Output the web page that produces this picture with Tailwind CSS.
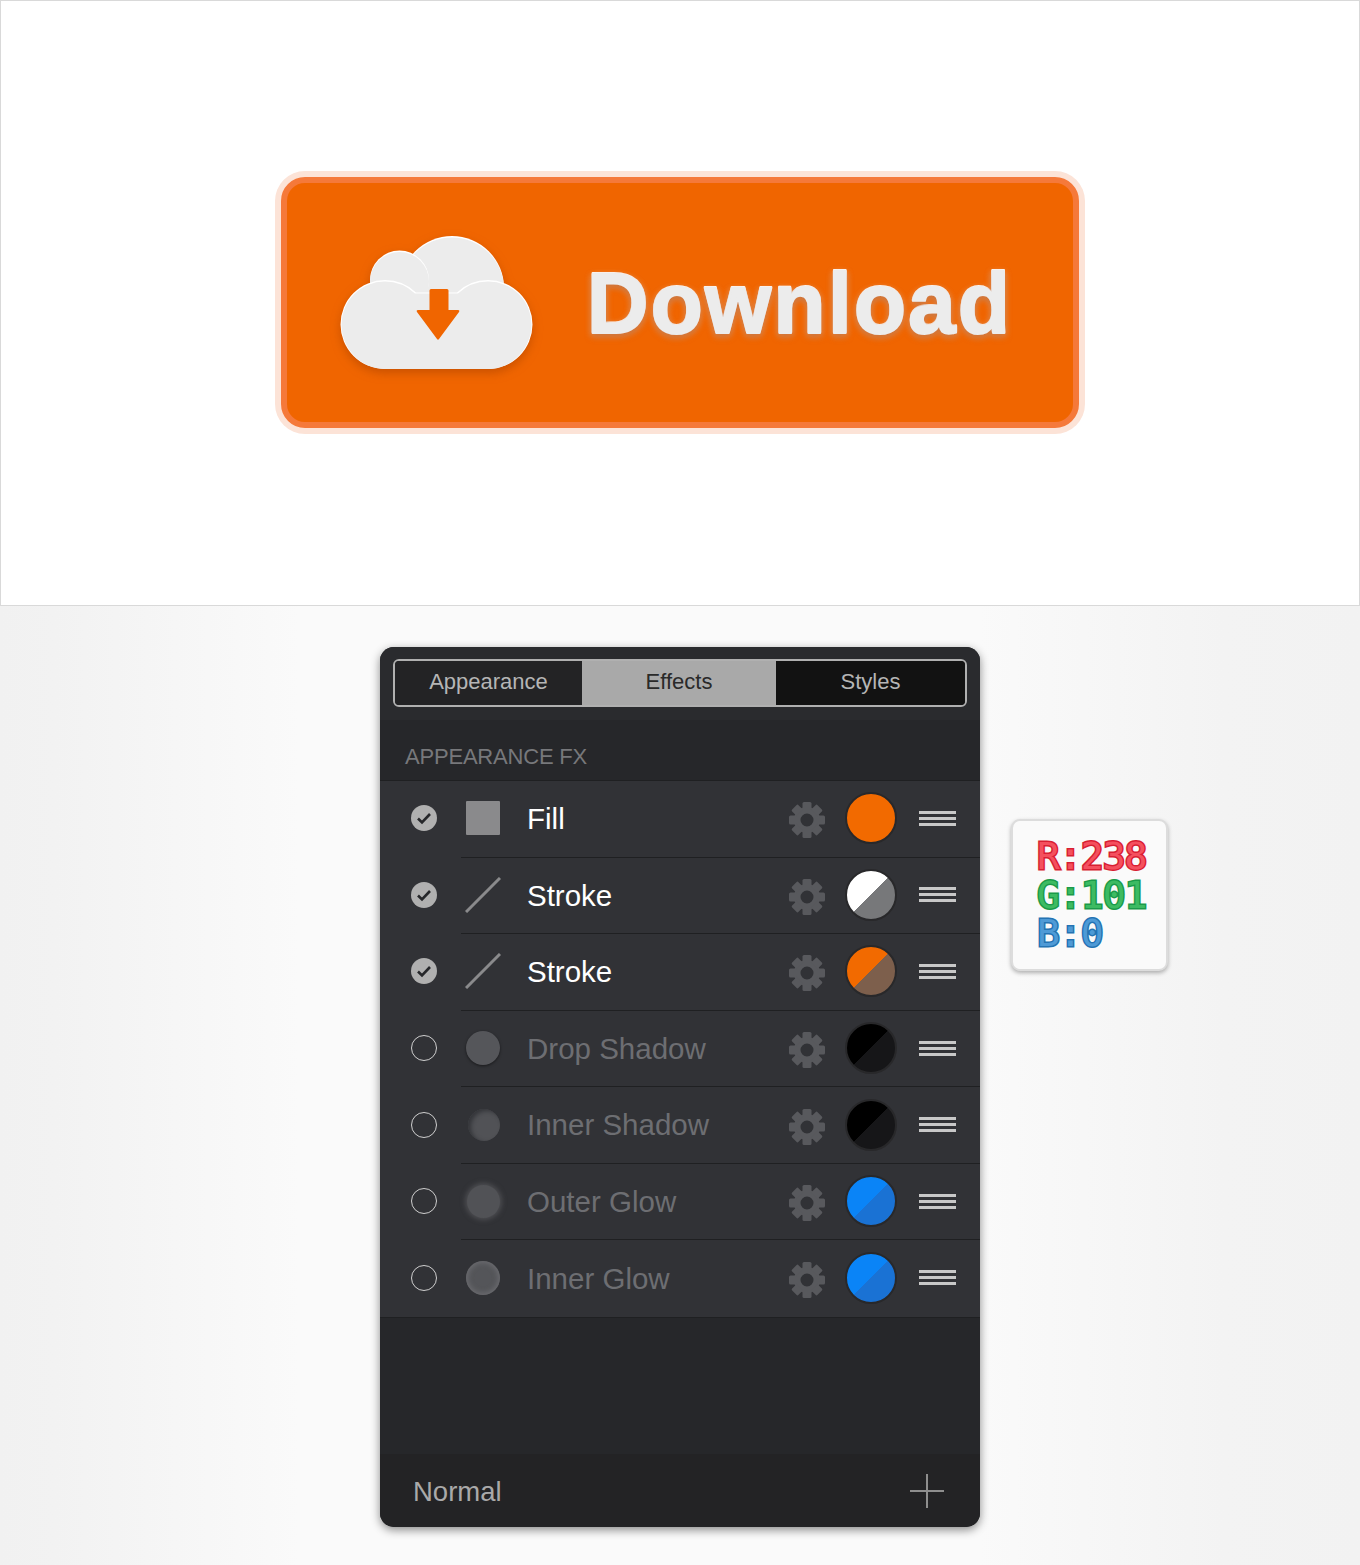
<!DOCTYPE html>
<html lang="en">
<head>
    <meta charset="UTF-8">
    <title>Download button and appearance panel</title>
    <script src="https://cdn.jsdelivr.net/npm/@tailwindcss/browser@4"></script>
</head>
<body class="w-[1360px] h-[1565px] overflow-hidden font-['Liberation_Sans',Arial,sans-serif] bg-[linear-gradient(90deg,#f1f1f1_0%,#f2f2f2_4%,#fafafa_22%,#fafafa_72%,#f3f3f3_90%,#f2f2f2_100%)]">
    <svg width="0" height="0" class="absolute">
        <defs>
            <g id="gear" fill="#58595d">
                <path fill-rule="evenodd" d="M18 5a13 13 0 1 0 0 26a13 13 0 1 0 0-26zM18 11.500a6.500 6.500 0 1 1 0 13a6.500 6.500 0 1 1 0-13z"/>
                <rect x="13.500" y="0" width="9" height="8" rx="1.500"/>
                <rect x="13.500" y="28" width="9" height="8" rx="1.500"/>
                <rect x="0" y="13.500" width="8" height="9" rx="1.500"/>
                <rect x="28" y="13.500" width="8" height="9" rx="1.500"/>
                <rect x="13.500" y="0" width="9" height="8" rx="1.500" transform="rotate(45 18 18)"/>
                <rect x="13.500" y="0" width="9" height="8" rx="1.500" transform="rotate(135 18 18)"/>
                <rect x="13.500" y="0" width="9" height="8" rx="1.500" transform="rotate(225 18 18)"/>
                <rect x="13.500" y="0" width="9" height="8" rx="1.500" transform="rotate(315 18 18)"/>
            </g>
        </defs>
    </svg>

    <!-- Button preview -->
    <section class="h-[606px] bg-white border border-[#d9d9d9] flex items-center justify-center pb-px">
        <div class="w-[798px] h-[251px] rounded-[24px] bg-[#f06500] border-[6px] border-[#f5793a] shadow-[0_0_0_6px_#fce3d7] flex items-center pl-[53px]">
            <svg class="drop-shadow-[0_4px_5px_rgba(170,65,0,0.55)] shrink-0" width="194" height="145" viewBox="340 230 194 145">
                <circle cx="452" cy="288" r="52" fill="#fff"/>
                <circle cx="452" cy="289.500" r="52" fill="#ececec"/>
                <circle cx="399.500" cy="280" r="29.500" fill="#fff"/>
                <circle cx="399.500" cy="281.500" r="29.500" fill="#ececec"/>
                <path d="M385 280a44.500 44.500 0 0 0 0 89h103a44.500 44.500 0 0 0 0-89a44.500 44.500 0 0 0-31 12.500h-41a44.500 44.500 0 0 0-31-12.500z" fill="#fff"/>
                <path d="M385 281.500a43 43 0 0 0-43.500 43c0 24 19.500 44.500 43.500 44.500h103c24 0 43.500-20.500 43.500-44.500a43 43 0 0 0-43.500-43a44 44 0 0 0-30 12h-43a44 44 0 0 0-30-12z" fill="#ececec"/>
                <path d="M430 289h17q1.500 0 1.500 1.500v19.500h9.500q2 0 1 2l-20 27q-1 1.500-2 0l-20-27q-1-2 1-2h11.500v-19.500q0-1.500 1.500-1.500z" fill="#f06500"/>
            </svg>
            <svg class="ml-[50px] shrink-0 overflow-visible drop-shadow-[0_-1px_0_#ffffff]" width="430" height="90">
                <text x="3" y="74.500" font-family="Liberation Sans" font-weight="700" font-size="85" letter-spacing="2.400" fill="#ececec" stroke="#ececec" stroke-width="2" stroke-linejoin="round" style="filter: drop-shadow(0 3px 3px rgba(170,65,0,0.6))">Download</text>
            </svg>
        </div>
    </section>

    <!-- Panel and colour chip -->
    <section class="grid grid-cols-[380px_600px_1fr] pt-[41px]">
        <div class="col-start-2 h-[880px] rounded-[14px] overflow-hidden flex flex-col bg-[#26272a] shadow-[0_3px_10px_rgba(0,0,0,0.45)]">
            <div class="h-[73px] shrink-0 bg-[#2a2b2e] pt-3 px-[13px]">
                <div class="h-[48px] w-[574px] flex rounded-[6px] border-2 border-[#b0b0b0] overflow-hidden text-[22px] text-[#b5b5b5]">
                    <div class="w-[187px] bg-[#232325] flex items-center justify-center pb-1">Appearance</div>
                    <div class="w-[194px] bg-[#a9a9a9] text-[#2a2a2a] flex items-center justify-center pb-1">Effects</div>
                    <div class="flex-1 bg-[#121212] flex items-center justify-center pb-1">Styles</div>
                </div>
            </div>
            <div class="h-[61px] shrink-0 pl-[25px] pt-[24px] text-[22px] leading-[26px] tracking-[-0.2px] text-[#77787b] border-b border-[#1f2022]">APPEARANCE FX</div>

            <div class="h-[537px] shrink-0 bg-[#313236] flex flex-col border-b border-[#1f2022]">
                <!-- Fill -->
                <div class="relative flex-1 flex items-center pl-[31px] pb-[2px] after:absolute after:left-[81px] after:right-0 after:bottom-0 after:h-px after:bg-[#1f2022]">
                    <svg width="26" height="26" viewBox="0 0 26 26" class="shrink-0"><circle cx="13" cy="13" r="13" fill="#b0b0b0"/><path d="M7 13.500l4 4l8-8.500" fill="none" stroke="#26272a" stroke-width="2.600"/></svg>
                    <div class="w-[92px] shrink-0 flex justify-center"><div class="w-[34px] h-[34px] bg-[#8a8a8c] rounded-[1px]"></div></div>
                    <span class="ml-[-2px] w-[262px] text-[29.500px] text-white translate-y-px">Fill</span>
                    <svg width="36" height="36" class="translate-y-[2px] shrink-0"><use href="#gear"/></svg>
                    <div class="ml-[20px] w-[52px] h-[52px] rounded-full border-2 border-[#28282a] bg-[#f26a00] shrink-0"></div>
                    <div class="ml-[22px] w-[37px] h-[15px] flex flex-col justify-between shrink-0"><i class="h-[3px] bg-[#c8c8c8]"></i><i class="h-[3px] bg-[#c8c8c8]"></i><i class="h-[3px] bg-[#c8c8c8]"></i></div>
                </div>
                <!-- Stroke -->
                <div class="relative flex-1 flex items-center pl-[31px] pb-[2px] after:absolute after:left-[81px] after:right-0 after:bottom-0 after:h-px after:bg-[#1f2022]">
                    <svg width="26" height="26" viewBox="0 0 26 26" class="shrink-0"><circle cx="13" cy="13" r="13" fill="#b0b0b0"/><path d="M7 13.500l4 4l8-8.500" fill="none" stroke="#26272a" stroke-width="2.600"/></svg>
                    <div class="w-[92px] shrink-0 flex justify-center"><svg width="36" height="36"><path d="M1 35L35 1" stroke="#8a8a8c" stroke-width="3"/></svg></div>
                    <span class="ml-[-2px] w-[262px] text-[29.500px] text-white translate-y-px">Stroke</span>
                    <svg width="36" height="36" class="translate-y-[2px] shrink-0"><use href="#gear"/></svg>
                    <div class="ml-[20px] w-[52px] h-[52px] rounded-full border-2 border-[#28282a] bg-[linear-gradient(135deg,#ffffff_50%,#77787a_50%)] shrink-0"></div>
                    <div class="ml-[22px] w-[37px] h-[15px] flex flex-col justify-between shrink-0"><i class="h-[3px] bg-[#c8c8c8]"></i><i class="h-[3px] bg-[#c8c8c8]"></i><i class="h-[3px] bg-[#c8c8c8]"></i></div>
                </div>
                <!-- Stroke -->
                <div class="relative flex-1 flex items-center pl-[31px] pb-[2px] after:absolute after:left-[81px] after:right-0 after:bottom-0 after:h-px after:bg-[#1f2022]">
                    <svg width="26" height="26" viewBox="0 0 26 26" class="shrink-0"><circle cx="13" cy="13" r="13" fill="#b0b0b0"/><path d="M7 13.500l4 4l8-8.500" fill="none" stroke="#26272a" stroke-width="2.600"/></svg>
                    <div class="w-[92px] shrink-0 flex justify-center"><svg width="36" height="36"><path d="M1 35L35 1" stroke="#8a8a8c" stroke-width="3"/></svg></div>
                    <span class="ml-[-2px] w-[262px] text-[29.500px] text-white translate-y-px">Stroke</span>
                    <svg width="36" height="36" class="translate-y-[2px] shrink-0"><use href="#gear"/></svg>
                    <div class="ml-[20px] w-[52px] h-[52px] rounded-full border-2 border-[#28282a] bg-[linear-gradient(135deg,#f26a00_50%,#7d5f4c_50%)] shrink-0"></div>
                    <div class="ml-[22px] w-[37px] h-[15px] flex flex-col justify-between shrink-0"><i class="h-[3px] bg-[#c8c8c8]"></i><i class="h-[3px] bg-[#c8c8c8]"></i><i class="h-[3px] bg-[#c8c8c8]"></i></div>
                </div>
                <!-- Drop Shadow -->
                <div class="relative flex-1 flex items-center pl-[31px] pb-[2px] after:absolute after:left-[81px] after:right-0 after:bottom-0 after:h-px after:bg-[#1f2022]">
                    <div class="w-[26px] h-[26px] rounded-full border-[1.500px] border-[#cfcfcf] shrink-0"></div>
                    <div class="w-[92px] shrink-0 flex justify-center"><div class="w-[34px] h-[34px] rounded-full bg-[#55565a] shadow-[0_1px_3px_rgba(0,0,0,0.5)]"></div></div>
                    <span class="ml-[-2px] w-[262px] text-[29.500px] text-[#6d6e72] translate-y-px">Drop Shadow</span>
                    <svg width="36" height="36" class="translate-y-[2px] shrink-0"><use href="#gear"/></svg>
                    <div class="ml-[20px] w-[52px] h-[52px] rounded-full border-2 border-[#28282a] bg-[linear-gradient(135deg,#000000_50%,#161618_50%)] shrink-0"></div>
                    <div class="ml-[22px] w-[37px] h-[15px] flex flex-col justify-between shrink-0"><i class="h-[3px] bg-[#c8c8c8]"></i><i class="h-[3px] bg-[#c8c8c8]"></i><i class="h-[3px] bg-[#c8c8c8]"></i></div>
                </div>
                <!-- Inner Shadow -->
                <div class="relative flex-1 flex items-center pl-[31px] pb-[2px] after:absolute after:left-[81px] after:right-0 after:bottom-0 after:h-px after:bg-[#1f2022]">
                    <div class="w-[26px] h-[26px] rounded-full border-[1.500px] border-[#cfcfcf] shrink-0"></div>
                    <div class="w-[92px] shrink-0 flex justify-center"><div class="w-[32px] h-[32px] ml-[2px] rounded-full bg-[#515256] shadow-[inset_3px_2px_4px_rgba(49,50,54,0.9)]"></div></div>
                    <span class="ml-[-2px] w-[262px] text-[29.500px] text-[#6d6e72] translate-y-px">Inner Shadow</span>
                    <svg width="36" height="36" class="translate-y-[2px] shrink-0"><use href="#gear"/></svg>
                    <div class="ml-[20px] w-[52px] h-[52px] rounded-full border-2 border-[#28282a] bg-[linear-gradient(135deg,#000000_50%,#161618_50%)] shrink-0"></div>
                    <div class="ml-[22px] w-[37px] h-[15px] flex flex-col justify-between shrink-0"><i class="h-[3px] bg-[#c8c8c8]"></i><i class="h-[3px] bg-[#c8c8c8]"></i><i class="h-[3px] bg-[#c8c8c8]"></i></div>
                </div>
                <!-- Outer Glow -->
                <div class="relative flex-1 flex items-center pl-[31px] pb-[2px] after:absolute after:left-[81px] after:right-0 after:bottom-0 after:h-px after:bg-[#1f2022]">
                    <div class="w-[26px] h-[26px] rounded-full border-[1.500px] border-[#cfcfcf] shrink-0"></div>
                    <div class="w-[92px] shrink-0 flex justify-center"><div class="w-[33px] h-[33px] rounded-full bg-[#515256] shadow-[0_0_5px_2px_rgba(105,106,110,0.5)]"></div></div>
                    <span class="ml-[-2px] w-[262px] text-[29.500px] text-[#6d6e72] translate-y-px">Outer Glow</span>
                    <svg width="36" height="36" class="translate-y-[2px] shrink-0"><use href="#gear"/></svg>
                    <div class="ml-[20px] w-[52px] h-[52px] rounded-full border-2 border-[#28282a] bg-[linear-gradient(135deg,#0a84f7_50%,#1a72d4_50%)] shrink-0"></div>
                    <div class="ml-[22px] w-[37px] h-[15px] flex flex-col justify-between shrink-0"><i class="h-[3px] bg-[#c8c8c8]"></i><i class="h-[3px] bg-[#c8c8c8]"></i><i class="h-[3px] bg-[#c8c8c8]"></i></div>
                </div>
                <!-- Inner Glow -->
                <div class="relative flex-1 flex items-center pl-[31px] pb-[2px]">
                    <div class="w-[26px] h-[26px] rounded-full border-[1.500px] border-[#cfcfcf] shrink-0"></div>
                    <div class="w-[92px] shrink-0 flex justify-center"><div class="w-[34px] h-[34px] rounded-full bg-[#545559] shadow-[inset_0_0_5px_2px_rgba(115,116,120,0.7)]"></div></div>
                    <span class="ml-[-2px] w-[262px] text-[29.500px] text-[#6d6e72] translate-y-px">Inner Glow</span>
                    <svg width="36" height="36" class="translate-y-[2px] shrink-0"><use href="#gear"/></svg>
                    <div class="ml-[20px] w-[52px] h-[52px] rounded-full border-2 border-[#28282a] bg-[linear-gradient(135deg,#0a84f7_50%,#1a72d4_50%)] shrink-0"></div>
                    <div class="ml-[22px] w-[37px] h-[15px] flex flex-col justify-between shrink-0"><i class="h-[3px] bg-[#c8c8c8]"></i><i class="h-[3px] bg-[#c8c8c8]"></i><i class="h-[3px] bg-[#c8c8c8]"></i></div>
                </div>
            </div>

            <div class="flex-1"></div>
            <div class="h-[73px] shrink-0 bg-[#232325] flex items-center justify-between pl-[33px] pr-[36px]">
                <span class="text-[27.500px] text-[#a9a9a9] translate-y-px">Normal</span>
                <svg width="34" height="34"><path d="M17 0V34M0 17H34" stroke="#8e8e8e" stroke-width="2"/></svg>
            </div>
        </div>

        <div class="ml-[31px] mt-[172px] w-[157px] h-[152px] rounded-[9px] bg-[#fafafa] border-2 border-[#dcdcdc] shadow-[0_2px_4px_rgba(0,0,0,0.3)] pl-[24px] pt-[16px] font-['DejaVu_Sans_Mono',monospace] text-[38px] leading-[38.500px] tracking-[-1px] [paint-order:stroke_fill]">
            <div class="text-[#f4505e] [-webkit-text-stroke:3px_#d81f33]">R:238</div>
            <div class="text-[#3dbb62] [-webkit-text-stroke:3px_#1b9a49]">G:101</div>
            <div class="text-[#4e9ad6] [-webkit-text-stroke:3px_#2473b3]">B:0</div>
        </div>
    </section>
</body>
</html>
